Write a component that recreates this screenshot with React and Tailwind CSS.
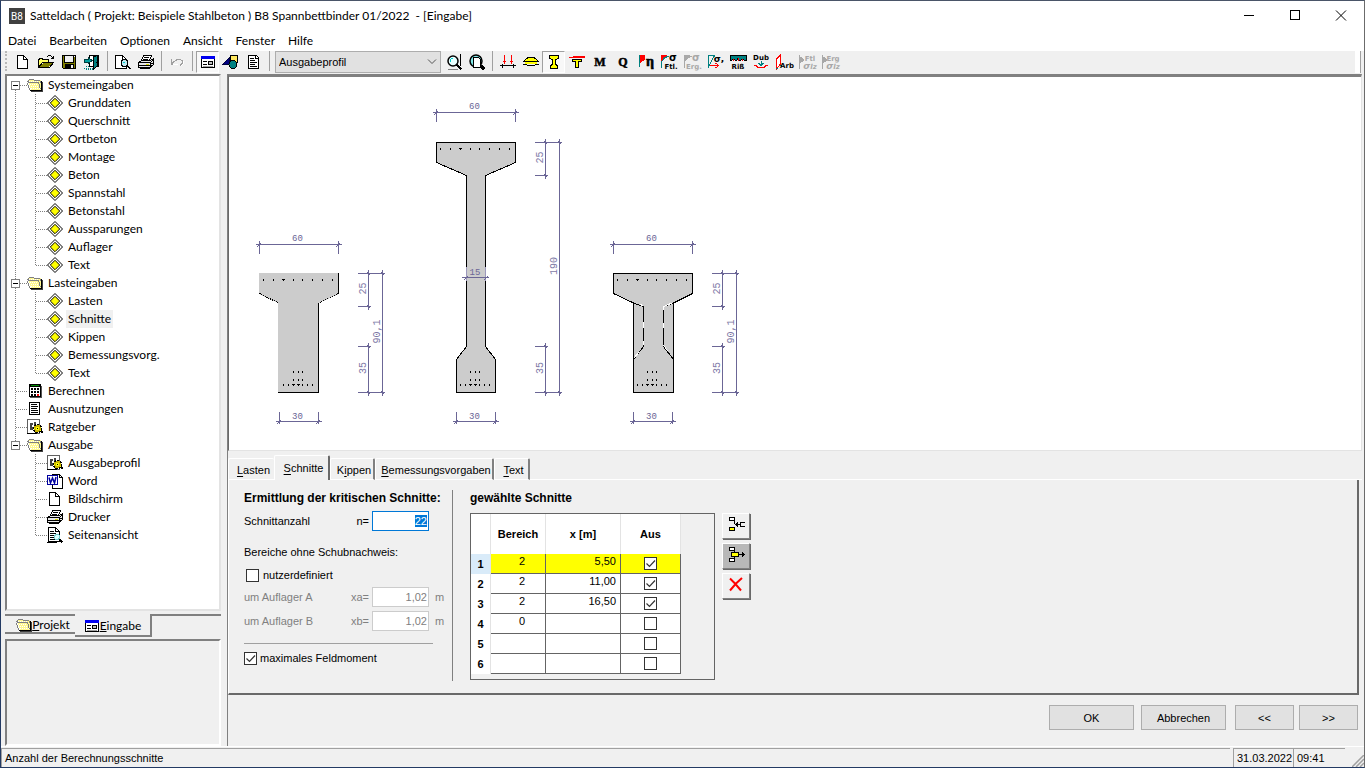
import { useEffect, useRef, useState } from 'react';

const UI = "font-['Lato','Open_Sans',sans-serif]";

/* ---------- small icons ---------- */

function Icon({ children, size = 16, className = '' }) {
  return (
    <svg
      width={size}
      height={size}
      viewBox={`0 0 ${size} ${size}`}
      shapeRendering="crispEdges"
      fill="none"
      stroke="none"
      aria-hidden="true"
      className={`shrink-0 overflow-visible ${className}`}
    >
      {children}
    </svg>
  );
}

const NewIcon = () => (
  <Icon>
    <path d="M2.5 1.5h6l4 4v9h-10z" fill="#fff" stroke="#000" />
    <path d="M8.5 1.5v4h4" stroke="#000" />
  </Icon>
);

const OpenIcon = () => (
  <Icon>
    <path d="M0 5h1V4h4v1h6v3H4v1L1 14H0z" fill="#ff6" />
    <path d="M.5 13.5v-8h1v-1h3v1h6v3M4.5 8.5h11l-4 5H.5zM9 2.500h1M10 1.500h3M13 2.500h1M14 3.500h1M13 4.500h3M15.500 2v3" stroke="#000" />
    <path d="M5 9h9l-3 4H2z" fill="#808000" />
  </Icon>
);

const SaveIcon = () => (
  <Icon>
    <path d="M1.500 1.500h13v13h-12l-1-1z" fill="#808000" stroke="#000" />
    <path d="M4 2h8v6H4z" fill="#f0f0f0" />
    <path d="M4 10h9v4H4z" fill="#000" />
    <path d="M10 11h2v3h-2zM13 2h1v1h-1z" fill="#f0f0f0" />
    <path d="M3.500 2v6.500h9V2" stroke="#000" />
  </Icon>
);

const ExitIcon = () => (
  <Icon>
    <path d="M5 1h10v11H5z" fill="#fff" />
    <path d="M10 3l4-2v11l-4 3z" fill="#008080" />
    <path d="M5.500 4V1.500h9V13M5.500 8v4.500h4M9.500 3v12l4-3V1.500zM12 8v1" stroke="#000" />
    <path d="M0 5h4V3l4 3.500L4 10V8H0z" fill="#00a0a0" stroke="#004040" />
    <path d="M0 14h9M2 12h3M2 15h7" stroke="#008080" strokeDasharray="1 1" />
  </Icon>
);

const PreviewIcon = () => (
  <Icon>
    <path d="M.5 1.500h7l4 4v9H.5z" fill="#fff" stroke="#000" />
    <path d="M7.500 1.500v4h4" stroke="#000" />
    <circle cx="9.500" cy="9" r="3.500" fill="#c0e8f0" stroke="#000" />
    <path d="M12 11.500l3.500 3.500" stroke="#000" strokeWidth="2" />
    <path d="M8 8h2v1H8z" fill="#0cc" />
  </Icon>
);

const PrintIcon = () => (
  <Icon>
    <path d="M5.500 1.500h8l-2 5h-8z" fill="#fff" stroke="#000" />
    <path d="M6 3.500h5M5 5.500h5" stroke="#000" />
    <path d="M3.500 6.500h9l3-2v6l-3 3h-12v-5z" fill="#e8e8e8" stroke="#000" />
    <path d="M.5 8.500h12l3-3M12.500 8.500v5M1 11.500h11M13 9.500h2M13 11.500h2" stroke="#000" />
    <path d="M8 10h3v1H8z" fill="#dd0" />
    <path d="M2.500 13.500v1h9v-1" stroke="#000" />
  </Icon>
);

const UndoIcon = () => (
  <Icon>
    <path d="M2.500 5v5h5M3 9.500l2-2 2-1 1-1h3l2 1v3l-2 2" stroke="#a0a0a0" />
    <path d="M3.500 10.500h5M14 7v3l-2 2" stroke="#fff" />
  </Icon>
);

const FormIcon = () => (
  <Icon>
    <path d="M1.500 2.500h13v11h-13z" fill="#fff" stroke="#000" />
    <path d="M1 2h14v3H1z" fill="#0000f0" />
    <path d="M3 7.500h4M3 10.500h4" stroke="#000" />
    <path d="M8.500 7.500h4v3h-4z" fill="#c0c0c0" stroke="#000" />
    <path d="M3 12h10v1H3z" fill="#a0a0a0" />
  </Icon>
);

const ShapesIcon = () => (
  <Icon>
    <path d="M7.500 1.500h7v7h-7z" fill="#ffe860" stroke="#000" />
    <path d="M0 10l6-6v6z" fill="#000080" stroke="#000040" />
    <circle cx="10" cy="10.500" r="4" fill="#008080" stroke="#000" />
  </Icon>
);

const DocIcon = () => (
  <Icon>
    <path d="M2.500 1.500h8l2 2v11h-10z" fill="#fff" stroke="#000" />
    <path d="M4 4.500h4M4 6.500h5M4 8.500h7M4 10.500h5M4 12.500h7M9.500 1.500v3h3" stroke="#000" />
  </Icon>
);

const ZoomIcon = () => (
  <Icon>
    <path d="M14.500 0v12" stroke="#000" />
    <circle cx="7" cy="7" r="5" fill="#e8ffff" stroke="#000" strokeWidth="1.500" shapeRendering="auto" />
    <path d="M5 4.500h2M4.500 5v3" stroke="#0cc" />
    <path d="M10.500 10.500l5 5" stroke="#000" strokeWidth="2" />
    <path d="M2 15.500h10" stroke="#808080" />
  </Icon>
);

const ZoomPageIcon = () => (
  <Icon>
    <circle cx="7" cy="7" r="6" fill="#7fe8e8" stroke="#000" strokeWidth="1.500" shapeRendering="auto" />
    <path d="M4.500 3.500h5l2 2v8h-7z" fill="#fff" stroke="#000" />
    <path d="M12 12l3.500 3.500" stroke="#000" strokeWidth="3" />
  </Icon>
);

const LoadIcon = () => (
  <Icon>
    <path d="M0 11.500h16M2.500 10v4M13.500 10v4" stroke="#000" />
    <path d="M4.500 1v9M11.500 1v9M3 7.500h3M10 7.500h3M4 8.500h1" stroke="#f00" />
  </Icon>
);

const BeamIcon = () => (
  <Icon>
    <path d="M1.500 6.500L5 3.500h6l3.500 3v1h-13z" fill="#ff0" stroke="#000" />
    <path d="M0 7.500h16" stroke="#000" />
    <path d="M2 9h12" stroke="#ff0" strokeWidth="2" />
    <path d="M0 10.500h4M12 10.500h4M4 11.500h8" stroke="#000" />
  </Icon>
);

const ProfileIcon = () => (
  <Icon>
    <path d="M3.500 1.500h9v3l-3 1v5l2 1v3h-7v-3l2-1v-5l-3-1z" fill="#ff0" stroke="#000" />
  </Icon>
);

const SlabIcon = () => (
  <Icon>
    <path d="M0 3l8-1h8v2H0z" fill="#f00" />
    <path d="M3.500 5.500h9v2h-3v6h-3v-6h-3z" fill="#ff0" stroke="#000" />
  </Icon>
);

const LetterIcon = ({ letter }) => (
  <Icon>
    <text x="8" y="12" textAnchor="middle" fontFamily="'Liberation Serif', serif" fontWeight="bold" fontSize="12" fill="#000" stroke="#000" strokeWidth=".5">
      {letter}
    </text>
  </Icon>
);

const EtaIcon = () => (
  <Icon>
    <path d="M1 1h6v5l-3 1-2 3z" fill="#f00" />
    <path d="M1 1h1v12H1z" fill="#008080" />
    <text x="12" y="12" textAnchor="middle" fontFamily="'Liberation Serif', serif" fontWeight="bold" fontSize="14" fill="#000" stroke="#000" strokeWidth=".6">
      η
    </text>
  </Icon>
);

const SigmaIcon = ({ label, disabled }) => (
  <Icon>
    <path d="M0 1h7L4 3 2 6 1 9H0z" fill={disabled ? '#a8a8a8' : '#f00'} />
    <path d="M.5 14V8l3-4 4-2" stroke={disabled ? '#a8a8a8' : '#008080'} />
    <text x="12" y="7" textAnchor="middle" fontFamily="'DejaVu Sans', sans-serif" fontWeight="bold" fontSize="10" fill={disabled ? '#a8a8a8' : '#000'}>
      σ
    </text>
    <text x="10" y="15" textAnchor="middle" fontFamily="'DejaVu Sans', sans-serif" fontWeight="bold" fontSize="7" fill={disabled ? '#a8a8a8' : '#000'}>
      {label}
    </text>
  </Icon>
);

const StressIcon = () => (
  <Icon>
    <path d="M1.500 14v-12.500h6l-6 11.500" stroke="#008080" />
    <path d="M3 11.500h8M8.500 9l3 2.500-3 2.500" stroke="#f00" />
    <text x="12" y="8" textAnchor="middle" fontFamily="'DejaVu Sans', sans-serif" fontWeight="bold" fontSize="9" fill="#000">
      σ,
    </text>
  </Icon>
);

const CrackIcon = () => (
  <Icon>
    <path d="M0 1h16v5h-2l-2-1-1 1H9L8 4 7 6H5L4 5 2 6H0z" fill="#008080" stroke="#000" />
    <path d="M3 5h1v2H3zM8 4h1v3H8zM12 5h1v2h-1z" fill="#f00" />
    <text x="8" y="15" textAnchor="middle" fontFamily="'DejaVu Sans', sans-serif" fontWeight="bold" fontSize="7" fill="#000">
      Riß
    </text>
  </Icon>
);

const DubIcon = () => (
  <Icon>
    <text x="8" y="6" textAnchor="middle" fontFamily="'DejaVu Sans', sans-serif" fontWeight="bold" fontSize="7" fill="#000">
      Dub
    </text>
    <path d="M8 7v4M5.500 9l2.500 2.500L10.500 9" stroke="#008080" />
    <path d="M1 11.500h2l2 2h6l2-2h2" stroke="#f00" />
  </Icon>
);

const ArbIcon = () => (
  <Icon>
    <path d="M.5 15V5l4-4v9z" fill="#fff" stroke="#f00" />
    <path d="M0 14h2M4 11h2" stroke="#008080" />
    <text x="11" y="14" textAnchor="middle" fontFamily="'DejaVu Sans', sans-serif" fontWeight="bold" fontSize="7" fill="#000">
      Arb
    </text>
  </Icon>
);

const MutedIcon = ({ label }) => (
  <Icon>
    <path d="M.5 1v14M1 3l4 3-4 3z" fill="#a8a8a8" stroke="#a8a8a8" />
    <text x="11" y="7" textAnchor="middle" fontFamily="'DejaVu Sans', sans-serif" fontWeight="bold" fontSize="7" fill="#a8a8a8">
      {label}
    </text>
    <text x="11" y="15" textAnchor="middle" fontFamily="'DejaVu Sans', sans-serif" fontWeight="bold" fontStyle="italic" fontSize="9" fill="#a8a8a8">
      σ<tspan fontSize="7">lz</tspan>
    </text>
  </Icon>
);

const FolderIcon = () => (
  <Icon>
    <path d="M1 3h1V2h4l1 1h7v10H3L1 5z" fill="#fff890" />
    <path d="M1 6l2 7h1L2 6z" fill="#fff" />
    <path d="M3 7.500h8M4 9.500h8M4 11.500h9M2 4.500h9" stroke="#fff" strokeDasharray="1 1" />
    <path d="M.5 5.500l1-2 1-1h4l1 1h5l1 1v1" stroke="#808080" />
    <path d="M.5 5.500h11l2 7M.5 6l2 7" stroke="#808080" />
    <path d="M3 13.500h11.500V4" stroke="#000" />
    <path d="M15.500 5v9H4" stroke="#404040" />
  </Icon>
);

const DiamondIcon = () => (
  <Icon>
    <path d="M8 .500L15.500 8 8 15.500.500 8z" fill="#fff" stroke="#000" shapeRendering="auto" />
    <path d="M8 3.300L12.700 8 8 12.700 3.300 8z" fill="#ff0" stroke="#000" shapeRendering="auto" />
  </Icon>
);

const CalcIcon = () => (
  <Icon>
    <path d="M2.500 1.500h11v12h-11z" fill="#fff" stroke="#000" />
    <path d="M3 2h10v2H3z" fill="#000" />
    <path d="M4 2h8v1H4z" fill="#080" />
    <path d="M4 6h8M4 9h8M4 12h5" stroke="#000" strokeWidth="2" strokeDasharray="2 1" />
    <path d="M10 11h2v2h-2z" fill="#f00" />
    <path d="M3 14.500h11.500V3" stroke="#555" />
  </Icon>
);

const ListIcon = () => (
  <Icon>
    <path d="M2.500 1.500h10v12h-10z" fill="#fff" stroke="#000" />
    <path d="M4 3.500h6M4 5.500h7M4 7.500h6M4 9.500h7M4 11.500h7" stroke="#000" />
  </Icon>
);

const GearDocIcon = () => (
  <Icon>
    <path d="M.5 .5h12v14H.5z" fill="#fff" stroke="#606060" />
    <path d="M0 14.500h10" stroke="#000" />
    <path d="M3 4h3v2H5v2h1v3H3zM7 3h2v3H7z" fill="#444" />
    <circle cx="10.500" cy="9.500" r="4" fill="#c8b400" stroke="#000" strokeWidth="1.500" strokeDasharray="2 1" />
    <path d="M9 8h3v3H9zM7 9h1v1H7zM13 11h1v1h-1z" fill="#ff0" />
    <path d="M10 9h1v1h-1zM14 7h1v1h-1zM14 12h2v2h-2z" fill="#000" />
  </Icon>
);

const WordIcon = () => (
  <Icon>
    <path d="M5.500 1.500h7l3 3v11h-10z" fill="#fff" stroke="#000" />
    <path d="M12.500 1.500v3h3" stroke="#000" />
    <path d="M.5 2.500h10v9H.5z" fill="#fff" stroke="#0000a0" />
    <path d="M2 4.500l1.500 5.500 2-5 2 5 1.500-6" stroke="#0000a0" strokeWidth="1.500" shapeRendering="auto" />
  </Icon>
);

const SeekPageIcon = () => (
  <Icon>
    <path d="M1.500 .5h7l4 4v10h-11z" fill="#fff" stroke="#000" />
    <path d="M8.500 .5v4h4M3 4.500h4M3 6.500h6M3 8.500h4M3 10.500h4M3 12.500h6M0 15.500h10" stroke="#000" />
    <circle cx="10" cy="10" r="2.500" fill="#dff" stroke="#7cc" />
    <path d="M12.500 12l2.500 3.500" stroke="#000" strokeWidth="2" />
  </Icon>
);

const InsertRowIcon = () => (
  <Icon size={18}>
    <path d="M2.500 .5h5v3h-5z" fill="#fff" stroke="#000" />
    <path d="M2.500 10.500h5v3h-5z" fill="#ff0" stroke="#000" />
    <path d="M7.500 4v3M8 7.500h5M10.500 5v5M9.500 6v3" stroke="#000" />
    <path d="M18 5.500h-4.500v4H18" stroke="#000" />
  </Icon>
);

const RemoveRowIcon = () => (
  <Icon size={18}>
    <path d="M2.500 .5h5v3h-5zM2.500 11.500h5v3h-5z" fill="#fff" stroke="#000" />
    <path d="M4.500 5.500h7v4h-7z" fill="#ff0" stroke="#000" />
    <path d="M7.500 4v1M7.500 10v1M12 7.500h6M15.500 5v5M16.500 6v3" stroke="#000" />
  </Icon>
);

const DeleteIcon = () => (
  <Icon size={18}>
    <path d="M3 1.500l5 5 6 7M15 1L9 6.500l-6 7" stroke="#f00" strokeWidth="2" shapeRendering="auto" />
  </Icon>
);

/* ---------- toolbar ---------- */

function ToolButton({ label, pressed, disabled, children }) {
  return (
    <button
      type="button"
      aria-label={label}
      aria-pressed={pressed}
      disabled={disabled}
      className={`flex h-[22px] w-[23px] shrink-0 items-center justify-center ${
        pressed ? 'border border-t-[#a0a0a0] border-l-[#a0a0a0] border-r-white border-b-white bg-[#f8f8f8]' : ''
      }`}
    >
      {children}
    </button>
  );
}

const Separator = () => (
  <span className="flex w-2 shrink-0 justify-center">
    <span className="h-5 w-px bg-[#a0a0a0]" />
  </span>
);

function Toolbar() {
  return (
    <div className="flex h-[23px] items-start bg-[#f0f0f0] pr-[3px] pl-1">
      <span className="mr-1 h-5 w-[2px] border-l-2 border-dotted border-[#b8b8b8]" />
      <ToolButton label="Neu"><NewIcon /></ToolButton>
      <ToolButton label="Öffnen"><OpenIcon /></ToolButton>
      <ToolButton label="Speichern"><SaveIcon /></ToolButton>
      <ToolButton label="Beenden"><ExitIcon /></ToolButton>
      <Separator />
      <ToolButton label="Seitenansicht"><PreviewIcon /></ToolButton>
      <ToolButton label="Drucken"><PrintIcon /></ToolButton>
      <Separator />
      <ToolButton label="Rückgängig" disabled><UndoIcon /></ToolButton>
      <Separator />
      <ToolButton label="Eingabe" pressed><FormIcon /></ToolButton>
      <ToolButton label="Grafik"><ShapesIcon /></ToolButton>
      <ToolButton label="Text"><DocIcon /></ToolButton>
      <Separator />
      <span className="mr-px ml-[2px] grid h-[22px] w-[166px] shrink-0 items-center">
        <select
          aria-label="Profil"
          className="col-start-1 row-start-1 h-full w-full appearance-none border border-[#adadad] bg-[#e1e1e1] pl-[3px] text-[11px] text-black"
        >
          <option>Ausgabeprofil</option>
        </select>
        <svg width="10" height="6" viewBox="0 0 10 6" fill="none" className="pointer-events-none col-start-1 row-start-1 mr-1 justify-self-end">
          <path d="M1 .5l4 4 4-4" stroke="#555" />
        </svg>
      </span>
      <ToolButton label="Zoom"><ZoomIcon /></ToolButton>
      <ToolButton label="Ganze Seite"><ZoomPageIcon /></ToolButton>
      <Separator />
      <ToolButton label="Lasten"><LoadIcon /></ToolButton>
      <ToolButton label="Ansicht"><BeamIcon /></ToolButton>
      <ToolButton label="Profil anzeigen" pressed><ProfileIcon /></ToolButton>
      <ToolButton label="Platte"><SlabIcon /></ToolButton>
      <ToolButton label="Momente"><LetterIcon letter="M" /></ToolButton>
      <ToolButton label="Querkraft"><LetterIcon letter="Q" /></ToolButton>
      <ToolButton label="Ausnutzung"><EtaIcon /></ToolButton>
      <ToolButton label="Spannung Fertigteil"><SigmaIcon label="Ftl." /></ToolButton>
      <ToolButton label="Spannung ergänzt" disabled><SigmaIcon label="Erg." disabled /></ToolButton>
      <ToolButton label="Spannung"><StressIcon /></ToolButton>
      <ToolButton label="Rissbreite"><CrackIcon /></ToolButton>
      <ToolButton label="Durchbiegung"><DubIcon /></ToolButton>
      <ToolButton label="Arbeitslinie"><ArbIcon /></ToolButton>
      <ToolButton label="Schub Fertigteil" disabled><MutedIcon label="Ftl" /></ToolButton>
      <ToolButton label="Schub ergänzt" disabled><MutedIcon label="Erg" /></ToolButton>
      <span className="ml-auto h-[22px] w-[6px] border-r border-[#a0a0a0] bg-white" />
    </div>
  );
}

/* ---------- navigation tree ---------- */

const TREE = [
  {
    label: 'Systemeingaben',
    icon: FolderIcon,
    children: ['Grunddaten', 'Querschnitt', 'Ortbeton', 'Montage', 'Beton', 'Spannstahl', 'Betonstahl', 'Aussparungen', 'Auflager', 'Text'].map(
      (label) => ({ label, icon: DiamondIcon }),
    ),
  },
  {
    label: 'Lasteingaben',
    icon: FolderIcon,
    children: ['Lasten', 'Schnitte', 'Kippen', 'Bemessungsvorg.', 'Text'].map((label) => ({ label, icon: DiamondIcon })),
  },
  { label: 'Berechnen', icon: CalcIcon },
  { label: 'Ausnutzungen', icon: ListIcon },
  { label: 'Ratgeber', icon: GearDocIcon },
  {
    label: 'Ausgabe',
    icon: FolderIcon,
    children: [
      { label: 'Ausgabeprofil', icon: GearDocIcon },
      { label: 'Word', icon: WordIcon },
      { label: 'Bildschirm', icon: NewIcon },
      { label: 'Drucker', icon: PrintIcon },
      { label: 'Seitenansicht', icon: SeekPageIcon },
    ],
  },
];

function Guide({ up, down, branch, box }) {
  return (
    <svg width="20" height="18" viewBox="0 0 20 18" shapeRendering="crispEdges" fill="none" aria-hidden="true" className="shrink-0">
      {up && <path d="M8.500 0v9" stroke="#808080" strokeDasharray="1 1" />}
      {down && <path d="M8.500 10v8" stroke="#808080" strokeDasharray="1 1" />}
      {branch && <path d="M9 9.500h11" stroke="#808080" strokeDasharray="1 1" />}
      {box && <path d="M4.500 5.500h8v8h-8z" fill="#fff" stroke="#808080" />}
      {box && <path d="M6 9.500h5" stroke="#000" />}
    </svg>
  );
}

function Tree() {
  return (
    <ul className={`${UI} text-[12px] leading-[18px] text-black`}>
      {TREE.map((node, i) => {
        const last = i === TREE.length - 1;
        const NodeIcon = node.icon;
        return (
          <li key={node.label}>
            <div className="flex h-[18px] items-center">
              <Guide up={i > 0} down={!last} branch box={Boolean(node.children)} />
              <NodeIcon />
              <span className="ml-[5px] whitespace-nowrap">{node.label}</span>
            </div>
            {node.children && (
              <ul>
                {node.children.map((child, j) => {
                  const ChildIcon = child.icon;
                  return (
                    <li key={child.label} className="flex h-[18px] items-center">
                      <Guide up={!last} down={!last} />
                      <Guide up down={j < node.children.length - 1} branch />
                      <ChildIcon />
                      <span className={`ml-[3px] px-[2px] whitespace-nowrap ${child.label === 'Schnitte' ? 'bg-[#f0f0f0]' : ''}`}>
                        {child.label}
                      </span>
                    </li>
                  );
                })}
              </ul>
            )}
          </li>
        );
      })}
    </ul>
  );
}

function Sidebar() {
  return (
    <aside className="flex w-[216px] shrink-0 flex-col">
      <nav className="min-h-0 flex-1 overflow-hidden border-2 border-t-[#808080] border-r-[#e3e3e3] border-b-[#e3e3e3] border-l-[#808080] bg-white">
        <Tree />
      </nav>
      <div className={`${UI} mt-[3px] flex h-[23px] text-[12px] leading-none`}>
        <button type="button" className="flex h-5 w-[70px] items-center justify-center border-t-2 border-b-2 border-t-[#808080] border-b-[#808080] pt-px pl-[6px]">
          <FolderIcon />
          <span><u>P</u>rojekt</span>
        </button>
        <button type="button" className="flex h-[23px] w-[77px] items-center justify-center border-r-2 border-b-2 border-[#808080] pt-[2px]">
          <FormIcon />
          <span><u>E</u>ingabe</span>
        </button>
        <span className="h-[2px] flex-1 bg-[#808080]" />
      </div>
      <div className="mt-[2px] h-[107px] border-2 border-t-[#808080] border-r-white border-b-white border-l-[#808080]" />
    </aside>
  );
}

/* ---------- cross-section drawing ---------- */

const DIM = '#6b6696';

function DimText({ x, y, vertical, children }) {
  return (
    <text
      x={x}
      y={y}
      textAnchor="middle"
      fontFamily="'Liberation Mono', monospace"
      fontSize={vertical ? 10 : 9}
      fill={vertical ? '#7d78a6' : DIM}
      transform={vertical ? `rotate(-90 ${x} ${y})` : undefined}
    >
      {children}
    </text>
  );
}

function HDim({ x1, x2, y, up, label }) {
  const end = up ? y - 9 : y + 10;
  const start = up ? y + 3 : y - 3;
  return (
    <g>
      <path
        d={`M${x1 - 3} ${y + 0.5}H${x2 + 4}M${x1 + 0.5} ${start}V${end}M${x2 + 0.5} ${start}V${end}M${x1 - 2} ${y + 3}l4 -4M${x2 - 2} ${y + 3}l4 -4`}
        stroke={DIM}
      />
      <DimText x={(x1 + x2) / 2 - 1} y={up ? y - 2 : y - 3}>{label}</DimText>
    </g>
  );
}

function VDim({ x, y1, y2, from, label }) {
  return (
    <g>
      <path
        d={`M${x + 0.5} ${y1 - 3}V${y2 + 4}M${from} ${y1 + 0.5}H${x + 3}M${from} ${y2 + 0.5}H${x + 3}M${x - 1} ${y1 - 1}l3 3M${x - 1} ${y2 - 1}l3 3`}
        stroke={DIM}
      />
      <DimText vertical x={x - 2} y={(y1 + y2) / 2 - 1}>{label}</DimText>
    </g>
  );
}

const TOP_STRANDS = [4, 14, 24, 34, 43, 53, 63, 73];
const MID_STRANDS = [34, 39, 43];
const LOW_STRANDS = [24, 29, 34, 39, 43, 48, 53];

function Strands({ x, top }) {
  return (
    <g fill="#000">
      {TOP_STRANDS.map((dx) => <rect key={dx} x={x + dx} y={top + 6} width="1" height="2" />)}
      {MID_STRANDS.map((dx) => <rect key={dx} x={x + dx} y={371} width="1" height="2" />)}
      {MID_STRANDS.map((dx) => <rect key={dx} x={x + dx} y={379} width="1" height="2" />)}
      {LOW_STRANDS.map((dx) => <rect key={dx} x={x + dx} y={384} width="1" height="2" />)}
      <rect x={x + 23} y={top + 6} width="3" height="1" />
      <rect x={x + 33} y={384} width="3" height="1" />
      <rect x={x + 38} y={384} width="3" height="1" />
    </g>
  );
}

function Frame({ x, top, dimTop, height }) {
  return (
    <g>
      <HDim x1={x} x2={x + 79} y={dimTop} label="60" />
      <HDim x1={x + 20} x2={x + 59} y={421} up label="30" />
      <VDim x={x + 109} y1={top} y2={top + 33} from={x + 99} label="25" />
      <VDim x={x + 109} y1={346} y2={392} from={x + 99} label="35" />
      <VDim x={x + 123} y1={top} y2={392} from={x + 109} label={height} />
      <Strands x={x} top={top} />
    </g>
  );
}

function Drawing() {
  return (
    <svg width="540" height="371" viewBox="229 77 540 371" fill="none" shapeRendering="crispEdges" role="img" aria-label="Binderquerschnitte" className="max-w-full">
      <path d="M259 273h80v21l-20 9v90h-41v-90l-19-9z" fill="#ccc" />
      <path d="M338.500 273v21M318.500 303v90M278 392.500h41" stroke="#000" />
      <path d="M338.500 293.500l-20 9.500M259.500 293.500l19 9.500" stroke="#000" strokeDasharray="1 1" />
      <Frame x={259} top={273} dimTop={244} height="90,1" />

      <path d="M436.500 142.500h79v20l-30 13v171l10 13v33h-39v-33l10-13v-171l-30-13z" fill="#ccc" stroke="#000" />
      <path d="M466.500 267v14M485.500 267v14" stroke="#9c98bc" />
      <path d="M462 277.500h27M464 280l4-4M484 280l4-4" stroke={DIM} />
      <DimText x={475} y={275}>15</DimText>
      <Frame x={436} top={142} dimTop={112} height="190" />

      <path d="M613.500 273.500h79v20l-19 9.500v89.500h-40v-89.500l-20-9.500z" fill="#ccc" stroke="#000" />
      <path d="M633.500 303l10 3.500v40l-10 13M673.500 303l-10 3.500v40l10 13" stroke="#000" />
      <path d="M640 304l3.500 2.500M643.500 322v6M643.500 341v4M639 352l-5 6M672 303l-8.500 3.500v3M663.500 323v5M663.500 345l4 6" stroke="#fff" />
      <Frame x={613} top={273} dimTop={244} height="90,1" />
    </svg>
  );
}

/* ---------- input form ---------- */

function Check({ id, label, ...rest }) {
  return (
    <span className="inline-grid size-[13px] shrink-0">
      <input
        id={id}
        type="checkbox"
        aria-label={label}
        className="peer col-start-1 row-start-1 size-[13px] appearance-none border border-[#333] bg-white"
        {...rest}
      />
      <svg viewBox="0 0 13 13" fill="none" className="pointer-events-none col-start-1 row-start-1 size-[13px] opacity-0 peer-checked:opacity-100">
        <path d="M2.500 6.500l3 3 5.500-6" stroke="#333" strokeWidth="1.200" />
      </svg>
    </span>
  );
}

const TABS = [
  { key: 'L', rest: 'asten', width: 'w-[46px]' },
  { key: 'S', rest: 'chnitte', width: 'w-[56px]', active: true },
  { pre: 'K', key: 'i', rest: 'ppen', width: 'w-[45px]' },
  { key: 'B', rest: 'emessungsvorgaben', width: 'w-[119px]' },
  { key: 'T', rest: 'ext', width: 'w-[36px]' },
];

function TabStrip() {
  return (
    <div role="tablist" className="flex h-[29px] items-end">
      {TABS.map((tab) => (
        <button
          key={tab.key}
          type="button"
          role="tab"
          aria-selected={Boolean(tab.active)}
          className={`flex items-center justify-center rounded-t-[2px] border-t border-l border-t-white border-l-white pl-1 whitespace-nowrap ${tab.width} ${
            tab.active ? 'h-[25px] border-r-2 border-r-[#696969]' : `h-[22px] border-b border-b-white pt-[2px] ${tab.key === 'L' ? '' : 'border-r-2 border-r-[#808080]'}`
          }`}
        >
          <span>{tab.pre}<u className="underline-offset-2">{tab.key}</u>{tab.rest}</span>
        </button>
      ))}
      <span className="h-px flex-1 bg-white" />
    </div>
  );
}

function SupportRow({ id, label, symbol }) {
  return (
    <div className="flex h-6 items-center text-[#808080]">
      <label htmlFor={id} className="flex flex-1 justify-between pr-[3px]">
        <span>{label}</span>
        <span>{symbol}</span>
      </label>
      <input id={id} disabled defaultValue="1,02" className="h-5 w-[57px] border border-[#ccc] bg-white pr-px text-right text-[11px] text-[#808080]" />
      <span className="w-[10px] pl-[6px]">m</span>
    </div>
  );
}

function CriticalSections() {
  const count = useRef(null);
  useEffect(() => {
    count.current.focus();
    count.current.select();
  }, []);
  return (
    <section className="flex w-[209px] shrink-0 flex-col border-r border-[#808080] pr-[13px]">
      <h2 className="text-[12px] leading-4 font-bold whitespace-nowrap">Ermittlung der kritischen Schnitte:</h2>
      <div className="mt-[5px] flex h-5 items-center">
        <label htmlFor="n" className="flex flex-1 justify-between pr-[3px]">
          <span>Schnittanzahl</span>
          <span>n=</span>
        </label>
        <input
          id="n"
          ref={count}
          defaultValue="22"
          className="h-5 w-[57px] border border-[#0078d7] bg-white pr-px text-right text-[11px] outline-none selection:bg-[#0078d7] selection:text-white"
        />
        <span className="w-[10px]" />
      </div>
      <p className="mt-[13px] leading-4">Bereiche ohne Schubnachweis:</p>
      <div className="mt-[7px] mb-[2px] flex h-4 items-center gap-1 pl-[2px]">
        <Check id="custom" />
        <label htmlFor="custom">nutzerdefiniert</label>
      </div>
      <SupportRow id="xa" label="um Auflager A" symbol="xa=" />
      <SupportRow id="xb" label="um Auflager B" symbol="xb=" />
      <hr className="mt-[10px] mr-[6px] border-[#a0a0a0]" />
      <div className="mt-[6px] flex h-4 items-center gap-[3px]">
        <Check id="maxmoment" defaultChecked />
        <label htmlFor="maxmoment">maximales Feldmoment</label>
      </div>
    </section>
  );
}

const ROWS = [
  { area: '2', x: '5,50', out: true },
  { area: '2', x: '11,00', out: true },
  { area: '2', x: '16,50', out: true },
  { area: '0', x: '', out: false },
  { area: '', x: '', out: false },
  { area: '', x: '', out: false },
];

function ChosenSections() {
  const [selected, setSelected] = useState(0);
  return (
    <section className="ml-[17px]">
      <h2 className="text-[12px] leading-4 font-bold">gewählte Schnitte</h2>
      <div className="mt-[7px] flex items-start gap-[7px]">
        <div className="h-[167px] w-[245px] border border-[#646464]">
          <table className="table-fixed border-separate border-spacing-0 text-[12px] leading-none">
            <thead>
              <tr className="h-10 bg-white text-[11px]">
                <th className="w-5 border-r border-[#e3e3e3]" aria-label="Nr." />
                <th className="w-[55px] border-r border-[#e3e3e3]">Bereich</th>
                <th className="w-[75px] border-r border-[#e3e3e3]">x [m]</th>
                <th className="w-[60px] border-r border-[#e3e3e3]">Aus</th>
              </tr>
            </thead>
            <tbody>
              {ROWS.map((row, i) => {
                const cell = `h-5 border-r border-b border-[#646464] ${i === selected ? 'bg-[#ffff00]' : 'bg-white'}`;
                return (
                  <tr key={i} onClick={() => setSelected(i)}>
                    <th className={`h-5 border-r border-[#e3e3e3] p-0 text-[11px] ${i === selected ? 'bg-[#d9ebf9]' : 'bg-white'}`}>{i + 1}</th>
                    <td className={`${cell} p-0 pb-1 pl-2 text-center align-middle text-[11px]`}>{row.area}</td>
                    <td className={`${cell} p-0 pr-1 pb-1 text-right align-middle text-[11px]`}>{row.x}</td>
                    <td className={`${cell} p-0 text-center`}>
                      <span className="flex justify-center">
                        <Check label={`Aus ${i + 1}`} defaultChecked={row.out} />
                      </span>
                    </td>
                  </tr>
                );
              })}
            </tbody>
          </table>
        </div>
        <div className="flex flex-col gap-1">
          {[
            { label: 'Zeile einfügen', Glyph: InsertRowIcon, look: 'bg-[#f0f0f0]' },
            { label: 'Zeile entfernen', Glyph: RemoveRowIcon, look: 'bg-[#b8b8b8]' },
            { label: 'Alle löschen', Glyph: DeleteIcon, look: 'bg-[#f0f0f0]' },
          ].map(({ label, Glyph, look }) => (
            <button
              key={label}
              type="button"
              aria-label={label}
              className={`flex h-[26px] w-7 items-center justify-center border border-t-white border-r-[#808080] border-b-[#808080] border-l-white shadow-[1px_1px_0_#696969] ${look}`}
            >
              <Glyph />
            </button>
          ))}
        </div>
      </div>
    </section>
  );
}

function PushButton({ wide, children }) {
  return (
    <button type="button" className={`h-[25px] border border-[#adadad] bg-[#e1e1e1] ${wide ? 'w-[85px]' : 'w-[59px]'}`}>
      {children}
    </button>
  );
}

/* ---------- window ---------- */

export default function App() {
  return (
    <div className="flex h-screen min-h-[700px] w-full flex-col overflow-hidden border border-t-[#4a5568] border-r-[#6b6b6b] border-b-[#233a63] border-l-[#233a63] bg-[#f0f0f0] font-['Liberation_Sans',Arial,sans-serif] text-[11px] leading-4 text-black">
      <header className={`${UI} bg-white text-[12px]`}>
        <div className="flex h-[30px] items-center pl-2">
          <svg width="16" height="16" viewBox="0 0 16 16" aria-hidden="true" className="shrink-0">
            <rect width="16" height="16" fill="#404040" />
            <text x="8" y="12" textAnchor="middle" fontFamily="Roboto, sans-serif" fontSize="10" fill="#fff">B8</text>
          </svg>
          <h1 className="ml-[5px] flex-1 whitespace-pre">Satteldach ( Projekt: Beispiele Stahlbeton ) B8 Spannbettbinder 01/2022  - [Eingabe]</h1>
          <button type="button" aria-label="Minimieren" className="flex h-full w-[46px] items-center justify-center">
            <Icon size={12}><path d="M1 5.500h10" stroke="#000" /></Icon>
          </button>
          <button type="button" aria-label="Maximieren" className="flex h-full w-[46px] items-center justify-center">
            <Icon size={12}><path d="M1.500 .5h9v9h-9z" stroke="#000" /></Icon>
          </button>
          <button type="button" aria-label="Schließen" className="flex h-full w-[46px] items-center justify-center">
            <Icon size={12}><path d="M1 .5l10 10M11 .5L1 10.500" stroke="#000" shapeRendering="auto" /></Icon>
          </button>
        </div>
        <nav className="flex h-5 items-center gap-[13px] pl-[7px]">
          {['Datei', 'Bearbeiten', 'Optionen', 'Ansicht', 'Fenster', 'Hilfe'].map((item) => (
            <button key={item} type="button">{item}</button>
          ))}
        </nav>
      </header>
      <Toolbar />

      <div className="flex min-h-0 flex-1 gap-[6px] pr-[2px] pl-1">
        <Sidebar />
        <main className="flex min-w-0 flex-1 flex-col border-l border-[#808080]">
          <div className="min-h-0 flex-1 overflow-hidden border-t-3 border-r border-b border-l border-t-[#808080] border-r-[#e3e3e3] border-b-[#e3e3e3] border-l-[#696969] bg-white">
            <Drawing />
          </div>
          <TabStrip />
          <div className="mr-[3px] flex h-[215px] border-r-2 border-b-2 border-l border-r-[#696969] border-b-[#696969] border-l-white pt-[10px] pb-[12px] pl-[15px]">
            <CriticalSections />
            <ChosenSections />
          </div>
          <div className="mr-1 flex h-[51px] justify-end pt-[10px]">
            <div className="flex gap-[7px]">
              <PushButton wide>OK</PushButton>
              <PushButton wide>Abbrechen</PushButton>
            </div>
            <div className="ml-[9px] flex gap-[5px]">
              <PushButton>&lt;&lt;</PushButton>
              <PushButton>&gt;&gt;</PushButton>
            </div>
          </div>
        </main>
      </div>

      <footer className="flex h-[21px] shrink-0 items-end border-t border-white text-[11px] leading-[18px]">
        <span className="mr-[3px] h-[19px] flex-1 border-t border-l border-[#a0a0a0] pl-[3px]">Anzahl der Berechnungsschnitte</span>
        <span className="h-[19px] w-[60px] border-t border-l border-[#a0a0a0] pl-[3px] whitespace-nowrap">31.03.2022</span>
        <span className="h-[19px] w-[52px] border-t border-l border-[#a0a0a0] pl-[3px]">09:41</span>
        <svg width="12" height="12" viewBox="0 0 12 12" aria-hidden="true" className="ml-[7px]">
          <path d="M0 12L12 0M4 12l8-8M8 12l4-4" stroke="#a0a0a0" strokeWidth="1.500" />
        </svg>
      </footer>
    </div>
  );
}
